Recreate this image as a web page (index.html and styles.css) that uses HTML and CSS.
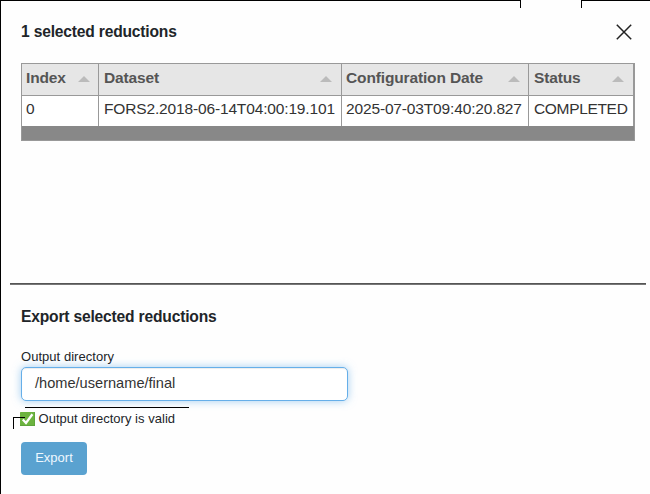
FILE: index.html
```html
<!DOCTYPE html>
<html lang="en">
<head>
<meta charset="utf-8">
<title>Export reductions</title>
<link rel="stylesheet" href="styles.css">
</head>
<body>
<main class="dialog">
  <span class="edge edge-left"></span><span class="edge edge-right"></span>
  <section class="selection">
    <header class="heading-row">
      <h2>1 selected reductions</h2>
      <svg class="close" viewBox="0 0 16 16" width="16" height="16"><path d="M.8 .8 15.2 15.2M15.2 .8 .8 15.2"/></svg>
    </header>
    <div class="table">
      <div class="row head">
        <div class="cell">Index<i class="sort"></i></div>
        <div class="cell">Dataset<i class="sort"></i></div>
        <div class="cell">Configuration Date<i class="sort"></i></div>
        <div class="cell">Status<i class="sort"></i></div>
      </div>
      <div class="row body">
        <div class="cell">0</div>
        <div class="cell">FORS2.2018-06-14T04:00:19.101</div>
        <div class="cell">2025-07-03T09:40:20.827</div>
        <div class="cell status">COMPLETED</div>
      </div>
    </div>
  </section>
  <hr>
  <section class="export">
    <h2>Export selected reductions</h2>
    <div class="label">Output directory</div>
    <div class="input">/home/username/final</div>
    <div class="valid">
      <svg class="check" viewBox="0 0 15 14" width="15" height="14"><rect width="15" height="14" rx=".6" fill="#6cb33f"/><path d="M0 13.5h15M14.6 0v14" stroke="#5ba03a" stroke-width=".8"/><path d="M2.8 7.4 6 11 12.4 2.3" fill="none" stroke="#fff" stroke-width="2.3"/></svg>
      <span>Output directory is valid</span>
      <span class="rule"></span><span class="corner"></span>
    </div>
    <div class="button">Export</div>
  </section>
</main>
</body>
</html>
```
FILE: styles.css
```css
* { box-sizing: border-box; }
body { margin: 0; background: #fefefe; color: #212529; font-family: "Liberation Sans", Arial, sans-serif; white-space: nowrap; }
.dialog { position: relative; width: 650px; height: 494px; border-left: 1px solid #000; overflow: hidden; }
.edge { position: absolute; top: 0; height: 8px; border-top: 1px solid #000; }
.edge-left { left: 0; width: 520px; border-right: 1px solid #000; }
.edge-right { left: 580px; right: 0; border-left: 1px solid #000; }
.selection { height: 283px; padding: 22px 15px 0 20px; }
h2 { margin: 0; font-size: 15.6px; line-height: 20px; font-weight: bold; letter-spacing: -.18px; }
.heading-row { display: flex; justify-content: space-between; height: 41px; padding-right: 3px; }
.close { margin-top: 2px; stroke: #222; stroke-width: 1.5; fill: none; }
.table { width: 614px; height: 78px; border: 1px solid #999; font-size: 15.5px; background: #888; }
.row { display: grid; grid-template-columns: 77px 243px 187px 105px; }
.cell { border-right: 1px solid #999; padding: 0 0 0 5px; line-height: 28px; letter-spacing: -.14px; }
.cell:first-child { padding-left: 4px; }
.cell:nth-child(3) { padding-left: 4px; }
.head { height: 32px; background: #e6e6e6; border-bottom: 1px solid #999; color: #555; font-weight: bold; }
.head .cell { display: flex; justify-content: space-between; padding-right: 8px; }
.head .cell:nth-child(2), .head .cell:nth-child(4) { padding-right: 9px; }
.sort { width: 0; height: 0; margin-top: 12px; border: solid transparent; border-width: 0 6px 6px; border-bottom-color: #bbb; }
.body { height: 30px; background: #fff; color: #333; }
.body .cell { line-height: 26px; letter-spacing: -.15px; }
.body .status { letter-spacing: -.33px; }
hr { width: 636px; height: 2px; margin: 0 0 0 9px; border: 0; border-top: 1px solid #555; background: #777; }
.export { padding: 22px 20px 0; }
.label { margin-top: 21px; height: 19px; font-size: 13px; line-height: 18px; letter-spacing: .04px; }
.input { width: 327px; height: 34px; border: 1px solid #66afe9; border-radius: 5px; padding-left: 13px; font-size: 14.6px; line-height: 31px; color: #333; background: #fff; box-shadow: inset 0 1px 1px rgba(0,0,0,.075), 0 0 8px rgba(102,175,233,.6); }
.valid { position: relative; display: flex; gap: 3.5px; height: 35px; margin-top: 6px; margin-left: -1px; padding-top: 3px; font-size: 13px; line-height: 18px; letter-spacing: .03px; }
.check { margin-top: 2px; }
.rule { position: absolute; left: 5px; top: 0; width: 164px; height: 1px; background: #000; }
.corner { position: absolute; left: -7px; top: 10px; width: 12px; height: 12px; border: solid #000; border-width: 1px 0 0 1px; }
.button { width: 66px; height: 33px; border-radius: 4px; background: #5aa2d0; color: #eef8ff; text-align: center; font-size: 13px; line-height: 32px; }
```
